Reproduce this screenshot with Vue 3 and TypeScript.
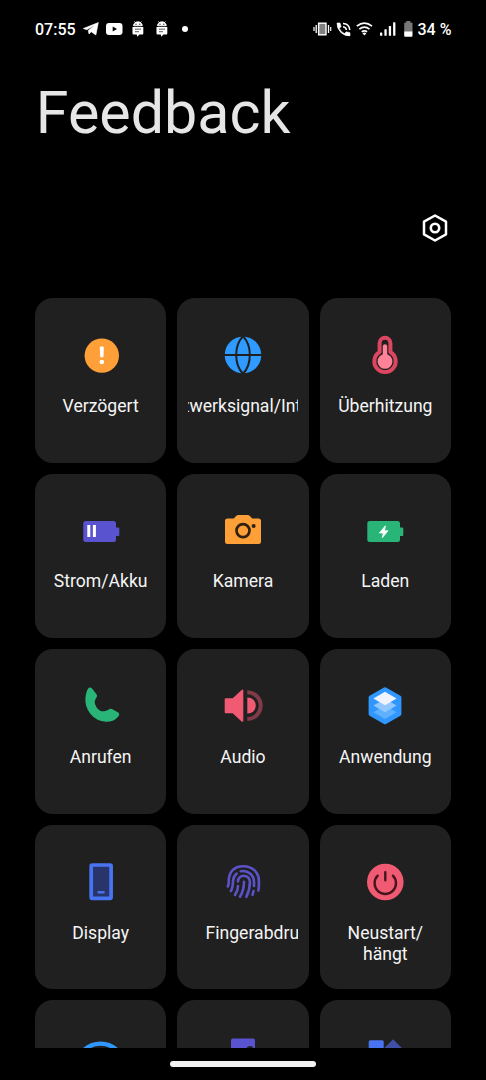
<script setup lang="ts">
interface Tile {
  id: string
  label: string
  scroll?: 'network' | 'finger'
}

const tiles: Tile[] = [
  { id: 'delay', label: 'Verzögert' },
  { id: 'network', label: 'Netzwerksignal/Internet', scroll: 'network' },
  { id: 'heat', label: 'Überhitzung' },
  { id: 'power', label: 'Strom/Akku' },
  { id: 'camera', label: 'Kamera' },
  { id: 'charge', label: 'Laden' },
  { id: 'call', label: 'Anrufen' },
  { id: 'audio', label: 'Audio' },
  { id: 'app', label: 'Anwendung' },
  { id: 'display', label: 'Display' },
  { id: 'finger', label: 'Fingerabdruck', scroll: 'finger' },
  { id: 'restart', label: 'Neustart/\nhängt' },
  { id: 'wifi', label: '' },
  { id: 'device', label: '' },
  { id: 'more', label: '' },
]
</script>

<template>
  <main class="screen">
    <header class="status">
      <div class="status-left">
        <span class="clock">07:55</span>
        <svg class="telegram" width="16" height="14" viewBox="0 0 16 14"><path d="M15.3.6 12.9 13 8.2 9.8 6 12 5.3 8.4 12 3 3.8 7.7.3 6.5Z" fill="#fff" stroke="#fff" stroke-width=".6" stroke-linejoin="round" /></svg>
        <svg class="youtube" width="17" height="12" viewBox="0 0 17 12"><rect width="16.5" height="12" rx="3" fill="#fff" /><path d="M6.7 3.4v5.2L11 6Z" fill="#000" /></svg>
        <svg v-for="n in 2" :key="n" class="bot" width="12" height="16" viewBox="0 0 12 16">
          <path d="M1.5 4.8a4.4 4 0 0 1 8.8 0ZM2.4.4l1.3 1.7M9.4.4 8.1 2.1" fill="#fff" stroke="#fff" stroke-width=".8" />
          <path d="M.5 6h10.800v6.500q0 1-1 1H7.500L5.200 15.800 4.800 13.500H1.600q-1.100 0-1.100-1Z" fill="#fff" />
          <path d="M3 8.200h6M3 10.700h4" stroke="#333" stroke-width=".8" />
          <circle cx="4" cy="3.200" r=".6" /><circle cx="7.800" cy="3.200" r=".6" />
        </svg>
        <span class="dot"></span>
      </div>
      <div class="status-right">
        <svg class="vibrate" width="19" height="14" viewBox="0 0 19 14" fill="none" stroke="#fff"><rect x="5.600" y="1.200" width="7.400" height="11.600" fill="#808080" stroke-width="1.400" /><path d="M3.200 3v8M15.500 3v8" stroke-width="1.300" /><path d="M1 5v4M17.700 5v4" stroke-width="1.200" /></svg>
        <svg class="call" width="15" height="15" viewBox="0 0 15 15"><path d="M1 1h3l1.100 3.600-1.800 1.800q1.600 3.500 5.200 5.200l1.800-1.800 3.700 1v3Q9 14.400 4.800 10.400 .8 6.300 1 1Z" fill="#fff" stroke="#fff" stroke-width=".6" stroke-linejoin="round" /><path d="M7 1.400q6.300.3 6.800 6.600M7 4.700q3 .3 3.400 3.300" fill="none" stroke="#fff" stroke-width="1.500" /></svg>
        <svg class="wifi" width="17" height="14" viewBox="0 0 17 14"><path d="M.8 4.200q7.500-6 15.200 0M3.300 7.200q5.200-4 10.200 0M5.700 9.800q2.700-2 5.400 0" fill="none" stroke="#fff" stroke-width="1.700" /><path d="m6.400 11.200 2 2.400 2-2.400q-2-1.400-4 0Z" fill="#fff" /></svg>
        <svg class="signal" width="16" height="14" viewBox="0 0 16 14" fill="#fff"><rect y="10.500" width="2.300" height="3.300" rx=".6" /><rect x="4.400" y="7.200" width="2.300" height="6.600" rx=".6" /><rect x="8.800" y="4" width="2.300" height="9.800" rx=".6" /><rect x="13.100" y=".3" width="2.300" height="13.500" rx=".6" /></svg>
        <svg class="battery" width="9" height="16" viewBox="0 0 9 16"><path d="M2.300 0h4v1.500h1.200q1 0 1 1V11H.2V2.500q0-1 1-1h1.100Z" fill="#777" /><path d="M.2 10.500h8.300v4.300q0 1-1 1H1.200q-1 0-1-1Z" fill="#fff" /></svg>
        <span class="percent">34 %</span>
      </div>
    </header>

    <h1 class="title">Feedback</h1>

    <div class="tools">
      <svg width="28" height="30" viewBox="0 0 28 30" fill="none" stroke="#fff" stroke-linejoin="round"><path d="M14 2.500 25 8.700V21.300L14 27.500 3 21.300V8.700Z" stroke-width="2.500" /><circle cx="14" cy="15" r="4.200" stroke-width="2.600" /></svg>
    </div>

    <section class="viewport">
      <div class="grid">
        <article v-for="t in tiles" :key="t.id" class="card">
          <svg class="icon" width="48" height="48" viewBox="0 0 48 48" fill="none">
            <template v-if="t.id === 'delay'">
              <circle cx="24.800" cy="24.600" r="17.200" fill="#ff9f38" />
              <path d="M22.800 16.500q0-1 1-1h2q1 0 1 1l-.3 9q0 .8-.8.800h-1.800q-.8 0-.8-.8Z" fill="#fff" />
              <circle cx="24.800" cy="31" r="2.300" fill="#fff" />
            </template>
            <template v-else-if="t.id === 'network'">
              <circle cx="24" cy="24" r="18.300" fill="#2f9aff" />
              <path d="M5 24h38M24 5.300Q17.200 12.300 17.200 24T24 42.800Q30.800 35.800 30.800 24T24 5.300" stroke="#202020" stroke-width="2" />
            </template>
            <template v-else-if="t.id === 'heat'">
              <path d="M18.600 12.200a5.400 5.400 0 0 1 10.800 0V21.100a10.700 10.700 0 1 1-10.800 0Z" stroke="#dc4661" stroke-width="4" stroke-linejoin="round" />
              <circle cx="24" cy="30.400" r="7.400" fill="#ff8299" />
              <path d="M24 15.500V29" stroke="#ff8299" stroke-width="4.400" stroke-linecap="round" />
            </template>
            <template v-else-if="t.id === 'power' || t.id === 'charge'">
              <path d="M8.800 13.900h27.700q2.500 0 2.500 2.500v4.100h2.300q1 0 1 1v6.500q0 1-1 1H39v3.400q0 2.500-2.500 2.500H8.800q-2.500 0-2.500-2.500V16.400q0-2.500 2.500-2.500Z" :fill="t.id === 'power' ? '#5a53d0' : '#29b578'" />
              <path v-if="t.id === 'power'" d="M10.300 18h3v12h-3ZM15.900 18h3v12h-3Z" fill="#fff" />
              <path v-else d="m24.400 18.800-6 7.200h3.900l-1 4.700 5.700-6.900h-3.500Z" fill="#fff" stroke="#fff" stroke-width=".8" stroke-linejoin="round" />
            </template>
            <template v-else-if="t.id === 'camera'">
              <path d="M8.500 11.600h6.300l2.300-2.500q1-1 2.500-1h8.800q1.500 0 2.500 1l2.300 2.500h6.300q2.500 0 2.500 2.500v20.500q0 2.500-2.500 2.500h-31Q6 37.100 6 34.600V14.100q0-2.500 2.500-2.500Z" fill="#ff9f38" />
              <circle cx="24" cy="23.600" r="6.500" stroke="#33210f" stroke-width="2.700" />
              <circle cx="34.600" cy="19" r="2" fill="#33210f" />
            </template>
            <template v-else-if="t.id === 'call'">
              <path d="M11.700 5.800q1.900-1 3.300.8l4.500 5.700q1.200 1.600.1 3-3.600 4.300-.3 9.600 3.800 5.600 8.900 4.100 2.500-.6 3.600-1.500 1.800-1.300 3.600-.3l5.400 3.100q2.500 1.600.7 3.900-4.200 5.500-12.500 5.500-9.500-.4-15.500-7.700-5.800-7.300-5.100-15.700.5-6.800 3.300-10.500Z" fill="#29b578" />
            </template>
            <template v-else-if="t.id === 'audio'">
              <path d="M6.700 16.200h7l8.900-8.200q1.700-1.200 1.700.7v30q0 1.900-1.700.7l-8.900-8.200h-7q-1 0-1-1v-13q0-1 1-1Z" fill="#f05a72" />
              <path d="M28.300 15.400h.4a8.100 8.100 0 0 1 0 16.200h-.4Z" fill="#f05a72" />
              <path d="M28.300 10.200a13.400 13.400 0 0 1 0 26.800" stroke="#823a49" stroke-width="4" />
            </template>
            <template v-else-if="t.id === 'app'">
              <path d="M24 7.200 38.400 15.500v16.400L24 40.200 9.600 31.900V15.500Z" fill="#3097ff" stroke="#3097ff" stroke-width="4" stroke-linejoin="round" />
              <path d="m24 23.500 11.600 6.700L24 36.900l-11.600-6.700Z" fill="#5fb0ff" />
              <path d="m24 16.900 11.600 6.700L24 30.300l-11.600-6.700Z" fill="#92c8ff" />
              <path d="m24 9.800 11.600 6.700L24 23.200l-11.600-6.700Z" fill="#f1f4ff" />
            </template>
            <template v-else-if="t.id === 'display'">
              <rect x="14.200" y="7" width="19.900" height="33.300" rx="1" fill="#29346a" stroke="#4874f2" stroke-width="3.700" />
              <path d="M20.600 34.300h7" stroke="#4874f2" stroke-width="2.400" />
            </template>
            <template v-else-if="t.id === 'finger'">
              <g stroke="#5b52c8" stroke-width="2.600" stroke-linecap="round">
                <path d="M8.800 28.500Q10 26.500 9.800 21C11 12 17 8.200 24.500 8.200c9 0 15.400 6.300 15.400 14.800q.2 5-.5 9.500" />
                <path d="M11.900 33q2-3.500 2.100-10 .2-4.500 3.700-7.400M21.700 13.200q5.500-1.100 9.700 2.600 3.600 3.200 3.600 8.200v4M34.500 33l-1 3.800" />
                <path d="M16 37q3-4.500 3-9M19 23.500q.3-5.600 6-5.800 5.700.6 5.900 6.500.1 7.300-3.600 14.600" />
                <path d="M21 38.700q4-6.500 4-15" />
              </g>
            </template>
            <template v-else-if="t.id === 'restart'">
              <circle cx="24.300" cy="24" r="18.300" fill="#f05a72" />
              <path d="M24.300 14.100v8.100M16.700 17.700a10.700 10.700 0 1 0 15.200 0" stroke="#46161e" stroke-width="2.400" stroke-linecap="round" />
            </template>
            <template v-else-if="t.id === 'wifi'">
              <path d="M1 23.500Q10.500 10.700 23.500 10.700T46 23.500" stroke="#3097ff" stroke-width="4.200" />
            </template>
            <template v-else-if="t.id === 'device'">
              <rect x="12" y="5.500" width="24" height="37" rx="2" fill="#5a53d0" />
              <circle cx="31" cy="16.800" r="3.700" fill="#202020" />
            </template>
            <template v-else>
              <rect x="7.700" y="7.200" width="15" height="15" rx="1.500" fill="#4874f2" />
              <path d="m32.100 6.300 9.200 9.200-9.200 9.200-9.200-9.200Z" fill="#3e50a5" />
            </template>
          </svg>
          <div class="label" :class="t.scroll"><span>{{ t.label }}</span></div>
        </article>
      </div>
    </section>

    <footer class="nav"><span class="handle"></span></footer>
  </main>
</template>

<style>
html,
body {
  background: #000;
}
</style>

<style scoped>
.screen {
  box-sizing: border-box;
  width: 486px;
  height: 1080px;
  display: flex;
  flex-direction: column;
  overflow: hidden;
  background: #000;
  color: #fff;
  font-family: Roboto, sans-serif;
}
svg {
  display: block;
  flex: none;
}
.status {
  height: 58px;
  flex: none;
  display: flex;
  justify-content: space-between;
  padding: 0 35px;
}
.status-left,
.status-right {
  display: flex;
  align-items: center;
}
.clock,
.percent {
  font-size: 16px;
  font-weight: 500;
  white-space: nowrap;
}
.clock {
  width: 47.500px;
}
.youtube {
  margin-left: 7px;
}
.bot {
  margin-left: 9px;
}
.bot + .bot {
  margin-left: 12px;
}
.dot {
  width: 6px;
  height: 6px;
  margin-left: 14.500px;
  border-radius: 50%;
  background: #fff;
}
.call {
  margin-left: 4.500px;
}
.wifi {
  margin-left: 4.500px;
}
.signal {
  margin-left: 7.500px;
}
.battery {
  margin-left: 7.500px;
}
.percent {
  width: 33.500px;
  margin-left: 5px;
}
.title {
  flex: none;
  height: 110px;
  margin: 0;
  padding: 20px 0 0 35.800px;
  box-sizing: border-box;
  font-size: 59.200px;
  line-height: 70px;
  font-weight: 400;
  color: #e6e6e6;
}
.tools {
  flex: none;
  height: 130.300px;
  box-sizing: border-box;
  display: flex;
  justify-content: flex-end;
  padding: 45px 37.500px 0 0;
}
.viewport {
  flex: none;
  height: 749.400px;
  padding: 0 35px;
  overflow: hidden;
}
.grid {
  display: grid;
  grid-template-columns: repeat(3, 1fr);
  grid-auto-rows: 164.550px;
  gap: 11px;
}
.card {
  min-width: 0;
  box-sizing: border-box;
  padding: 33px 10.700px 0;
  display: flex;
  flex-direction: column;
  align-items: center;
  background: #202020;
  border-radius: 18px;
}
.label {
  width: 100%;
  margin-top: 16.600px;
  overflow: hidden;
  font-size: 17.600px;
  line-height: 21px;
  text-align: center;
  white-space: pre;
  color: #f5f5f5;
}
.label.network,
.label.finger {
  text-align: left;
}
.label.network {
  text-indent: -34.900px;
}
.label.finger {
  text-indent: 17.500px;
}
.nav {
  flex: 1;
  display: flex;
  justify-content: center;
  padding-top: 13.300px;
}
.handle {
  width: 146px;
  height: 6px;
  border-radius: 3px;
  background: #f2f2f2;
}
</style>
